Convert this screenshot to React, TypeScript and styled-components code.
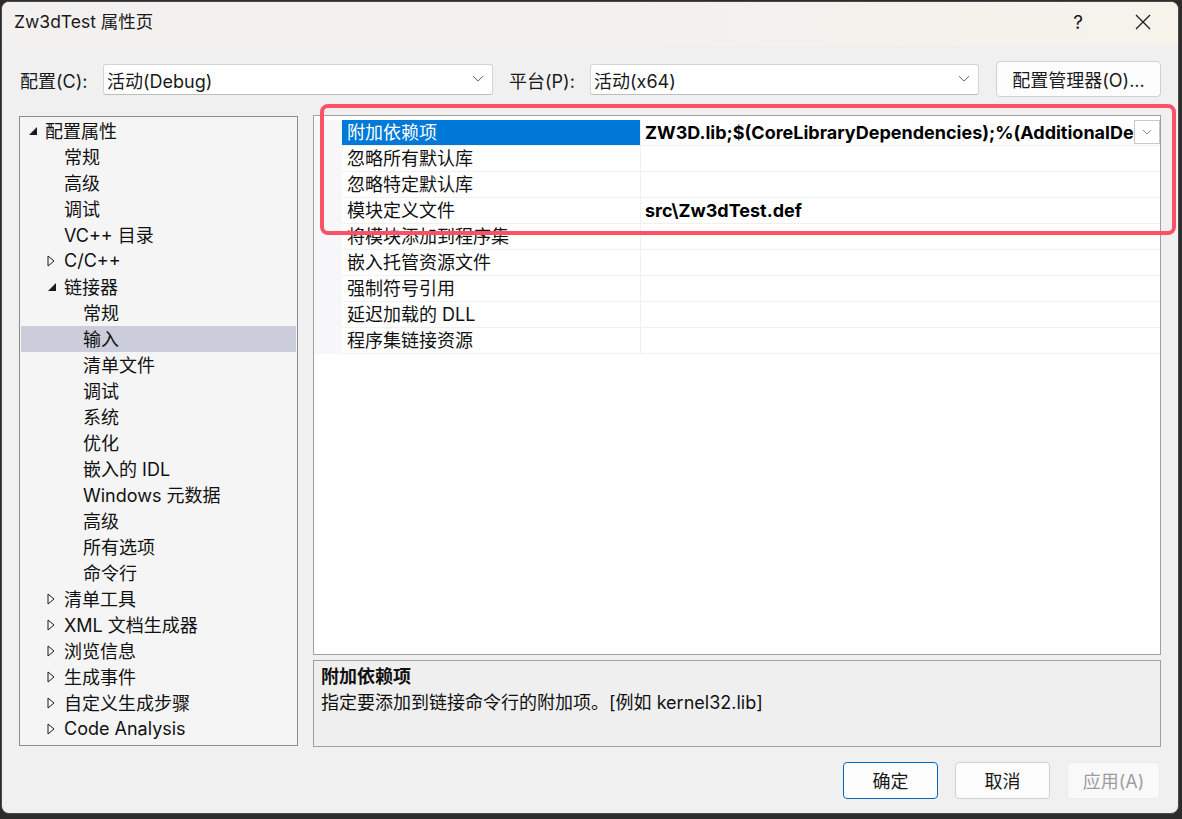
import React from "react";
import styled, { createGlobalStyle } from "styled-components";

const Global = createGlobalStyle`
  html, body { margin: 0; padding: 0; background: #2c2c2c; }
  body { width: 1182px; height: 819px; overflow: hidden; }
  * { box-sizing: border-box; }
`;

const FONT = `"Inter", "Noto Sans CJK SC", sans-serif`;

const Win = styled.div`
  position: relative;
  margin: 1px 0 0 1px;
  width: 1178px;
  height: 813px;
  border-radius: 8px;
  background: #f0f0f0;
  border: 1px solid #4a4a4a;
  overflow: hidden;
  display: flex;
  flex-direction: column;
  font-family: ${FONT};
  font-size: 18px;
  color: #000;
`;

const TitleBar = styled.div`
  height: 43px;
  flex: none;
  display: flex;
  align-items: center;
  padding-left: 12px;
  padding-bottom: 3px;
  background: linear-gradient(90deg, #f3f0f0 0%, #f3f1ef 50%, #f5f3ea 100%);
`;

const TitleText = styled.div`
  flex: 1;
  line-height: 20px;
  color: #1a1a1a;
  font-size: 17.5px;
`;

const TitleBtn = styled.div<{ $w: number }>`
  width: ${(p) => p.$w}px;
  height: 40px;
  display: flex;
  align-items: center;
  justify-content: center;
  color: #1a1a1a;
  font-size: 19px;
`;

const Body = styled.div`
  flex: 1;
  display: flex;
  flex-direction: column;
  padding: 16px 17px 0 17px;
`;

const ConfigRow = styled.div`
  display: flex;
  align-items: center;
  height: 36px;
`;

const Label = styled.div<{ $w: number; $ml?: number }>`
  width: ${(p) => p.$w}px;
  margin-left: ${(p) => p.$ml ?? 0}px;
  padding-left: 1px;
  padding-top: 2px;
  color: #1a1a1a;
  white-space: nowrap;
`;

const Combo = styled.div<{ $w: number }>`
  width: ${(p) => p.$w}px;
  height: 31px;
  background: #fff;
  border: 1px solid #d4d4d4;
  border-bottom-color: #bdbdbd;
  border-radius: 3px;
  display: flex;
  align-items: center;
  padding-left: 3px;
  padding-right: 8px;
  color: #1a1a1a;
`;

const ComboText = styled.div`
  flex: 1;
  white-space: nowrap;
  padding-top: 2px;
`;

const PushButton = styled.div<{ $w: number; $h: number; $ml?: number; $variant?: "default" | "normal" | "disabled" }>`
  width: ${(p) => p.$w}px;
  height: ${(p) => p.$h}px;
  margin-left: ${(p) => p.$ml ?? 0}px;
  border-radius: 4px;
  display: flex;
  align-items: center;
  justify-content: center;
  white-space: nowrap;
  padding-bottom: 1px;
  background: ${(p) => (p.$variant === "disabled" ? "#f9f9f9" : "#fdfdfd")};
  border: 1px solid
    ${(p) => (p.$variant === "default" ? "#0067c0" : p.$variant === "disabled" ? "#ebebeb" : "#d0d0d0")};
  color: ${(p) => (p.$variant === "disabled" ? "#9d9d9d" : "#1a1a1a")};
`;

const Main = styled.div`
  margin-top: 18px;
  display: flex;
  gap: 15px;
  height: 632px;
`;

const Tree = styled.div`
  width: 279px;
  height: 630px;
  margin-top: 1px;
  background: #f5f5f5;
  border: 1px solid #8c8c8c;
  padding-top: 1px;
`;

const TreeRow = styled.div<{ $level: number; $selected?: boolean }>`
  height: 26px;
  margin: 0 1px;
  display: flex;
  align-items: center;
  padding-left: ${(p) => 5 + p.$level * 19}px;
  padding-bottom: 2px;
  background: ${(p) => (p.$selected ? "#cbcdda" : "transparent")};
  white-space: nowrap;
  color: #111;
`;

const Toggle = styled.div`
  width: 19px;
  height: 24px;
  flex: none;
  display: flex;
  align-items: center;
  padding-left: 2px;
  padding-top: 2px;
`;

const RightCol = styled.div`
  flex: 1;
  display: flex;
  flex-direction: column;
  gap: 5px;
`;

const Grid = styled.div`
  height: 540px;
  background: #fff;
  border: 1px solid #a0a0a0;
  padding-top: 4px;
`;

const GridRow = styled.div`
  display: grid;
  grid-template-columns: 28px 299px 1fr;
  height: 26px;
`;

const Margin = styled.div`
  background: #f7f7f9;
`;

const NameCell = styled.div<{ $selected?: boolean }>`
  padding-left: 5px;
  line-height: 25px;
  border-bottom: 1px solid #f0f0f0;
  border-right: 1px solid #f0f0f0;
  background: ${(p) => (p.$selected ? "#0078d7" : "transparent")};
  color: ${(p) => (p.$selected ? "#fff" : "#111")};
  white-space: nowrap;
  overflow: hidden;
`;

const ValueCell = styled.div`
  position: relative;
  padding-left: 4px;
  line-height: 25px;
  border-bottom: 1px solid #f0f0f0;
  font-weight: 700;
  white-space: nowrap;
  overflow: hidden;
  display: flex;
`;

const ValueText = styled.div`
  flex: 1;
  overflow: hidden;
`;

const DropBtn = styled.div`
  width: 26px;
  height: 24px;
  flex: none;
  background: #fff;
  border: 1px solid #c8c8c8;
  display: flex;
  align-items: center;
  justify-content: center;
`;

const Desc = styled.div`
  height: 87px;
  border: 1px solid #a0a0a0;
  background: #efefef;
  padding: 3px 7px;
  line-height: 26px;
`;

const DescTitle = styled.div`
  font-weight: 700;
  color: #111;
`;

const DescText = styled.div`
  color: #111;
`;

const Footer = styled.div`
  display: flex;
  justify-content: flex-end;
  gap: 17px;
  margin-top: 15px;
  padding-right: 1px;
`;

const Highlight = styled.div`
  position: absolute;
  left: 318px;
  top: 102px;
  width: 856px;
  height: 131px;
  border: 4px solid #fd5266;
  border-radius: 8px;
  pointer-events: none;
`;

const Chevron = ({ size = 12, color = "#606060" }: { size?: number; color?: string }) => (
  <svg width={size} height={size * 0.6} viewBox="0 0 12 7">
    <polyline points="1,1 6,6 11,1" fill="none" stroke={color} strokeWidth="1" />
  </svg>
);

const Expanded = () => (
  <svg width="10" height="10" viewBox="0 0 10 10">
    <polygon points="9,1 9,9 1,9" fill="#1a1a1a" />
  </svg>
);

const Collapsed = () => (
  <svg width="8" height="12" viewBox="0 0 8 12">
    <polygon points="1,1 7,6 1,11" fill="none" stroke="#1a1a1a" strokeWidth="1" />
  </svg>
);

type Node = { label: string; level: number; toggle?: "open" | "closed"; selected?: boolean };

const tree: Node[] = [
  { label: "配置属性", level: 0, toggle: "open" },
  { label: "常规", level: 1 },
  { label: "高级", level: 1 },
  { label: "调试", level: 1 },
  { label: "VC++ 目录", level: 1 },
  { label: "C/C++", level: 1, toggle: "closed" },
  { label: "链接器", level: 1, toggle: "open" },
  { label: "常规", level: 2 },
  { label: "输入", level: 2, selected: true },
  { label: "清单文件", level: 2 },
  { label: "调试", level: 2 },
  { label: "系统", level: 2 },
  { label: "优化", level: 2 },
  { label: "嵌入的 IDL", level: 2 },
  { label: "Windows 元数据", level: 2 },
  { label: "高级", level: 2 },
  { label: "所有选项", level: 2 },
  { label: "命令行", level: 2 },
  { label: "清单工具", level: 1, toggle: "closed" },
  { label: "XML 文档生成器", level: 1, toggle: "closed" },
  { label: "浏览信息", level: 1, toggle: "closed" },
  { label: "生成事件", level: 1, toggle: "closed" },
  { label: "自定义生成步骤", level: 1, toggle: "closed" },
  { label: "Code Analysis", level: 1, toggle: "closed" },
];

const props: { name: string; value?: string; selected?: boolean; drop?: boolean }[] = [
  { name: "附加依赖项", value: "ZW3D.lib;$(CoreLibraryDependencies);%(AdditionalDependencies)", selected: true, drop: true },
  { name: "忽略所有默认库" },
  { name: "忽略特定默认库" },
  { name: "模块定义文件", value: "src\\Zw3dTest.def" },
  { name: "将模块添加到程序集" },
  { name: "嵌入托管资源文件" },
  { name: "强制符号引用" },
  { name: "延迟加载的 DLL" },
  { name: "程序集链接资源" },
];

export default function App() {
  return (
    <>
      <Global />
      <Win>
        <TitleBar>
          <TitleText>Zw3dTest 属性页</TitleText>
          <TitleBtn $w={60}>?</TitleBtn>
          <TitleBtn $w={70}>
            <svg width="16" height="16" viewBox="0 0 16 16">
              <path d="M1 1 L15 15 M15 1 L1 15" stroke="#1a1a1a" strokeWidth="1.3" fill="none" />
            </svg>
          </TitleBtn>
        </TitleBar>
        <Body>
          <ConfigRow>
            <Label $w={84}>配置(C):</Label>
            <Combo $w={390}>
              <ComboText>活动(Debug)</ComboText>
              <Chevron />
            </Combo>
            <Label $w={82} $ml={15}>平台(P):</Label>
            <Combo $w={389}>
              <ComboText>活动(x64)</ComboText>
              <Chevron />
            </Combo>
            <PushButton $w={165} $h={36} $ml={17} $variant="normal">
              配置管理器(O)...
            </PushButton>
          </ConfigRow>
          <Main>
            <Tree>
              {tree.map((n, i) => (
                <TreeRow key={i} $level={n.level} $selected={n.selected}>
                  <Toggle>
                    {n.toggle === "open" ? <Expanded /> : n.toggle === "closed" ? <Collapsed /> : null}
                  </Toggle>
                  {n.label}
                </TreeRow>
              ))}
            </Tree>
            <RightCol>
              <Grid>
                {props.map((p, i) => (
                  <GridRow key={i}>
                    <Margin />
                    <NameCell $selected={p.selected}>{p.name}</NameCell>
                    <ValueCell>
                      <ValueText>{p.value ?? ""}</ValueText>
                      {p.drop && (
                        <DropBtn>
                          <Chevron size={10} color="#707070" />
                        </DropBtn>
                      )}
                    </ValueCell>
                  </GridRow>
                ))}
              </Grid>
              <Desc>
                <DescTitle>附加依赖项</DescTitle>
                <DescText>指定要添加到链接命令行的附加项。[例如 kernel32.lib]</DescText>
              </Desc>
            </RightCol>
          </Main>
          <Footer>
            <PushButton $w={95} $h={37} $variant="default">确定</PushButton>
            <PushButton $w={95} $h={37} $variant="normal">取消</PushButton>
            <PushButton $w={93} $h={37} $variant="disabled">应用(A)</PushButton>
          </Footer>
        </Body>
        <Highlight />
      </Win>
    </>
  );
}
